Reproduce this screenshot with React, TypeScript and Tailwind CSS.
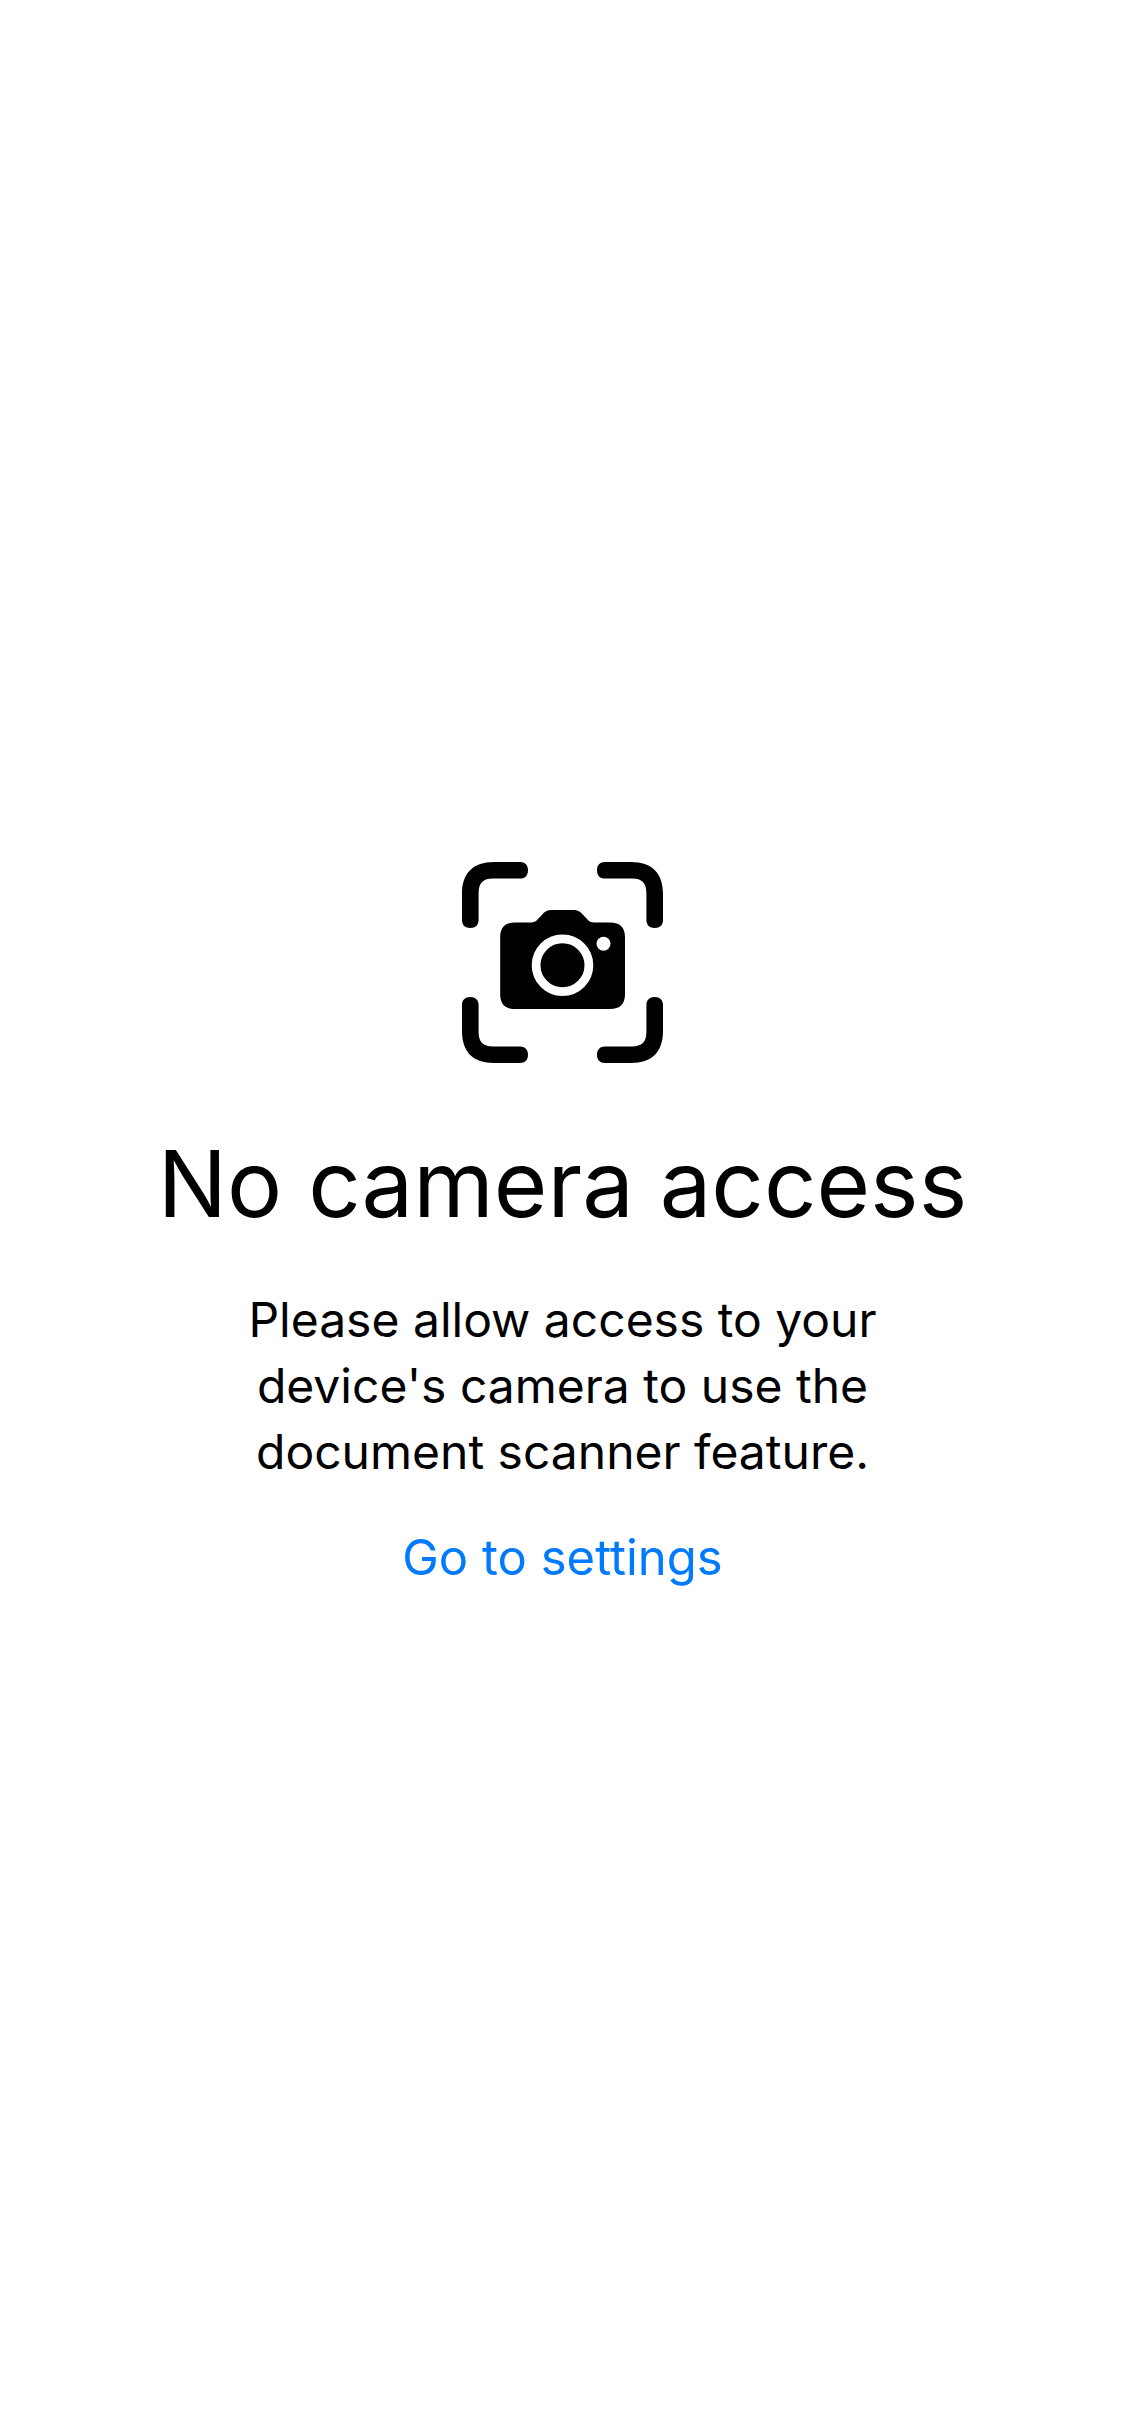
const corner =
  "M0 58V32C0 11 11 0 32 0H58C63 0 66 3 66 8.200C66 13.500 63 16.600 58 16.600H31C21 16.600 16.600 21 16.600 31V58C16.600 63 13.500 66 8.300 66C3 66 0 63 0 58Z";

function CameraScanIcon() {
  return (
    <svg viewBox="0 0 201 201" className="size-[201px]" aria-hidden="true">
      <path d={corner} />
      <path d={corner} transform="translate(201 0) scale(-1 1)" />
      <path d={corner} transform="translate(0 201) scale(1 -1)" />
      <path d={corner} transform="translate(201 201) scale(-1 -1)" />
      <path d="M53 60.500H69C72 60.500 73.500 59.700 75.500 57.500L80.500 52.200C83.500 49 85.500 48 90 48H111C115.500 48 117.500 49 120.500 52.200L125.500 57.500C127.500 59.700 129 60.500 132 60.500H148C158 60.500 163 65.500 163 75.500V132C163 142 158 147 148 147H53C43 147 38.200 142 38.200 132V75.500C38.200 65.500 43 60.500 53 60.500Z" />
      <circle cx="100.500" cy="103.300" r="26.400" fill="none" stroke="white" strokeWidth="8.800" />
      <circle cx="141.500" cy="81.700" r="7" fill="white" />
    </svg>
  );
}

export default function App() {
  return (
    <main className="flex min-h-screen flex-col items-center justify-center bg-white px-16 pt-4 font-['Inter',sans-serif] text-black">
      <CameraScanIcon />
      <h1 className="mt-16 text-center text-[92px] leading-[114px]">No camera access</h1>
      <p className="mt-[46px] max-w-[660px] text-center text-[48px] leading-[66px]">
        Please allow access to your device&apos;s camera to use the document scanner feature.
      </p>
      <a href="#settings" className="mt-10 text-[49px] leading-[66px] text-[#007aff]">
        Go to settings
      </a>
    </main>
  );
}
